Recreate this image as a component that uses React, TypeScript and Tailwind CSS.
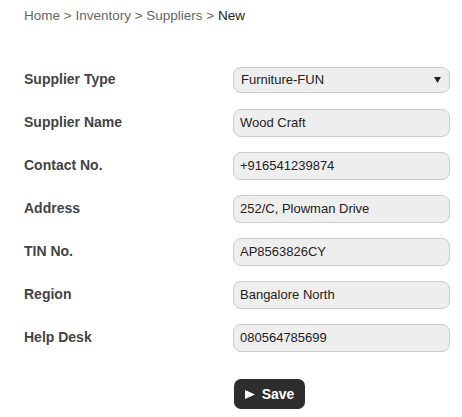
import React from "react";

const fields = [
  { label: "Supplier Name", value: "Wood Craft" },
  { label: "Contact No.", value: "+916541239874" },
  { label: "Address", value: "252/C, Plowman Drive" },
  { label: "TIN No.", value: "AP8563826CY" },
  { label: "Region", value: "Bangalore North" },
  { label: "Help Desk", value: "080564785699" },
];

export default function App() {
  return (
    <div className="w-[462px] h-[417px] bg-white pl-6 pt-2 font-['Liberation_Sans',Arial,sans-serif] text-[13px]">
      {/* Breadcrumb */}
      <div className="leading-4 text-[13.5px] text-[#666]">
        Home &gt; Inventory &gt; Suppliers &gt; <span className="text-[#222]">New</span>
      </div>

      {/* Form */}
      <div className="mt-[34px] flex flex-col">
        <div className="flex h-[43px] items-center">
          <label className="w-[209px] shrink-0 text-[14px] font-bold text-[#444]">Supplier Type</label>
          <div className="relative w-[217px] shrink-0">
            <select
              defaultValue="fun"
              className="h-[26px] w-full appearance-none rounded-[8px] border border-[#ccc] bg-[#eee] pl-[7px] text-[13px] text-[#222] outline-none"
            >
              <option value="fun">Furniture-FUN</option>
            </select>
            <svg className="pointer-events-none absolute right-[9px] top-[10px]" width="7" height="6" viewBox="0 0 7 6">
              <polygon points="0,0 7,0 3.5,6" fill="#222" />
            </svg>
          </div>
        </div>
        {fields.map((f) => (
          <div key={f.label} className="flex h-[43px] items-center">
            <label className="w-[209px] shrink-0 text-[14px] font-bold text-[#444]">{f.label}</label>
            <input
              readOnly
              defaultValue={f.value}
              className="h-[28px] w-[217px] shrink-0 rounded-[8px] border border-[#ccc] bg-[#eee] px-[6px] text-[13px] text-[#222] outline-none"
            />
          </div>
        ))}
      </div>

      {/* Actions */}
      <div className="mt-[20px] pl-[210px]">
        <button className="flex h-[30px] w-[71px] items-center justify-center gap-[7px] rounded-[7px] bg-[#2d2d2d] text-[14px] font-bold text-white">
          <svg width="10" height="9" viewBox="0 0 10 9">
            <polygon points="0,0 10,4.5 0,9" fill="#fff" />
          </svg>
          <span>Save</span>
        </button>
      </div>
    </div>
  );
}
